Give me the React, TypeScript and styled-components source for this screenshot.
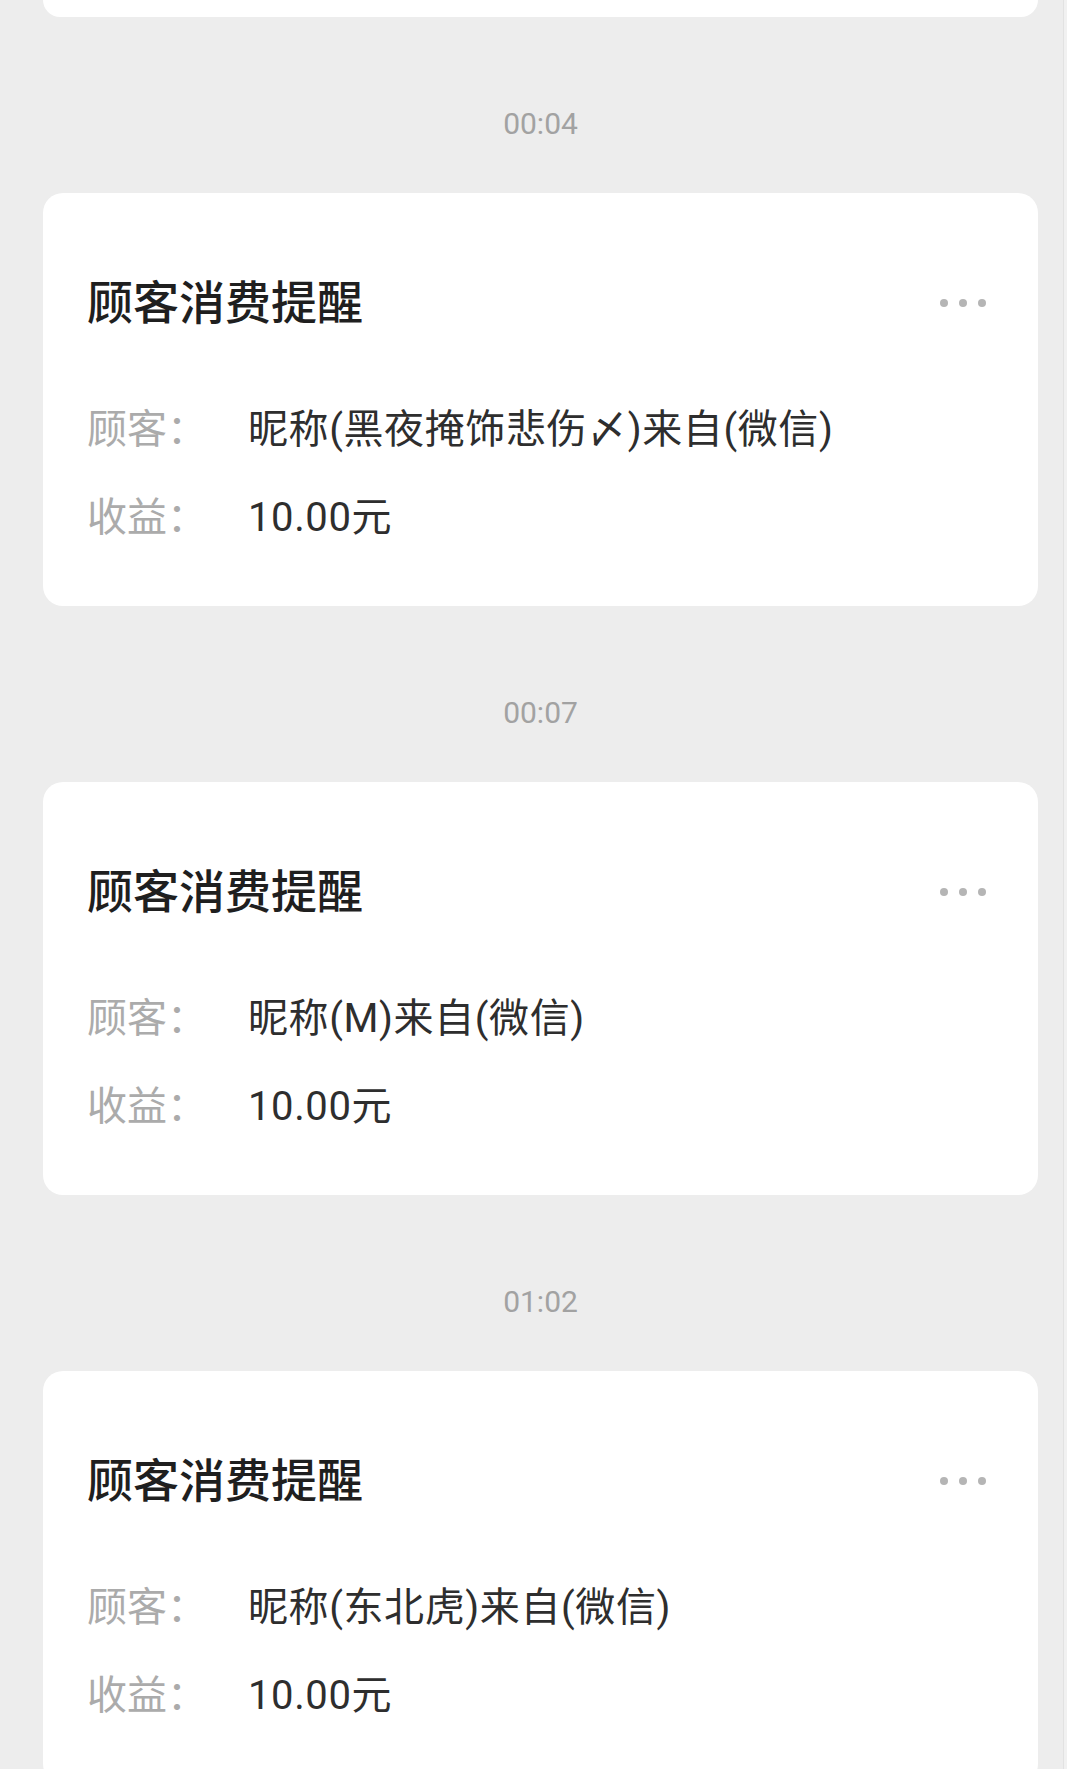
import React from "react";
import styled, { createGlobalStyle } from "styled-components";

const GlobalStyle = createGlobalStyle`
  html,
  body {
    margin: 0;
    padding: 0;
    background: #f1f1f1;
  }

  body {
    font-family: Roboto, "Noto Sans CJK SC", "Noto Sans", sans-serif;
    -webkit-font-smoothing: antialiased;
  }
`;

const Page = styled.main`
  box-sizing: border-box;
  width: 1064px;
  min-height: 1769px;
  padding: 0 25px 0 43px;
  background: #ededed;
  border-right: 1px solid #e2e2e2;
  overflow: hidden;
`;

const Card = styled.section`
  box-sizing: border-box;
  height: 413px;
  padding: 80px 52px 64px 44px;
  background: #ffffff;
  border-radius: 20px;
`;

// the previous message, scrolled almost out of view
const CardTail = styled.div`
  height: 17px;
  background: #ffffff;
  border-radius: 0 0 20px 20px;
`;

const TimeStamp = styled.div`
  box-sizing: border-box;
  height: 176px;
  padding-top: 92px;
  line-height: 30px;
  font-size: 30px;
  color: #a2a2a2;
  text-align: center;
`;

const TitleRow = styled.header`
  display: flex;
  align-items: center;
  justify-content: space-between;
  height: 60px;
`;

const Title = styled.h2`
  margin: 0;
  font-size: 46px;
  font-weight: 500;
  line-height: 60px;
  color: #1f1f1f;
`;

const MoreButton = styled.button`
  display: flex;
  align-items: center;
  gap: 11px;
  padding: 0;
  border: 0;
  background: none;
  cursor: pointer;
`;

const Dot = styled.span`
  width: 8px;
  height: 8px;
  border-radius: 50%;
  background: #b5b5b5;
`;

const Fields = styled.dl`
  display: flex;
  flex-direction: column;
  gap: 32px;
  margin: 65px 0 0;
`;

const Field = styled.div`
  display: flex;
  align-items: center;
  height: 56px;
  font-size: 40px;
`;

const Label = styled.dt`
  flex: 0 0 161px;
  color: #ababab;
`;

const Value = styled.dd`
  margin: 0;
  color: #2e2e2e;
  letter-spacing: 0.6px;
  white-space: nowrap;
`;

type Notice = {
  time: string;
  customer: string;
  income: string;
};

const notices: Notice[] = [
  { time: "00:04", customer: "昵称(黑夜掩饰悲伤〆)来自(微信)", income: "10.00元" },
  { time: "00:07", customer: "昵称(M)来自(微信)", income: "10.00元" },
  { time: "01:02", customer: "昵称(东北虎)来自(微信)", income: "10.00元" },
];

function NoticeCard({ customer, income }: Notice) {
  return (
    <Card>
      <TitleRow>
        <Title>顾客消费提醒</Title>
        <MoreButton aria-label="更多">
          <Dot />
          <Dot />
          <Dot />
        </MoreButton>
      </TitleRow>
      <Fields>
        <Field>
          <Label>顾客：</Label>
          <Value>{customer}</Value>
        </Field>
        <Field>
          <Label>收益：</Label>
          <Value>{income}</Value>
        </Field>
      </Fields>
    </Card>
  );
}

export default function App() {
  return (
    <>
      <GlobalStyle />
      <Page>
        <CardTail aria-hidden="true" />
        {notices.map((n) => (
          <React.Fragment key={n.time}>
            <TimeStamp>{n.time}</TimeStamp>
            <NoticeCard {...n} />
          </React.Fragment>
        ))}
      </Page>
    </>
  );
}
